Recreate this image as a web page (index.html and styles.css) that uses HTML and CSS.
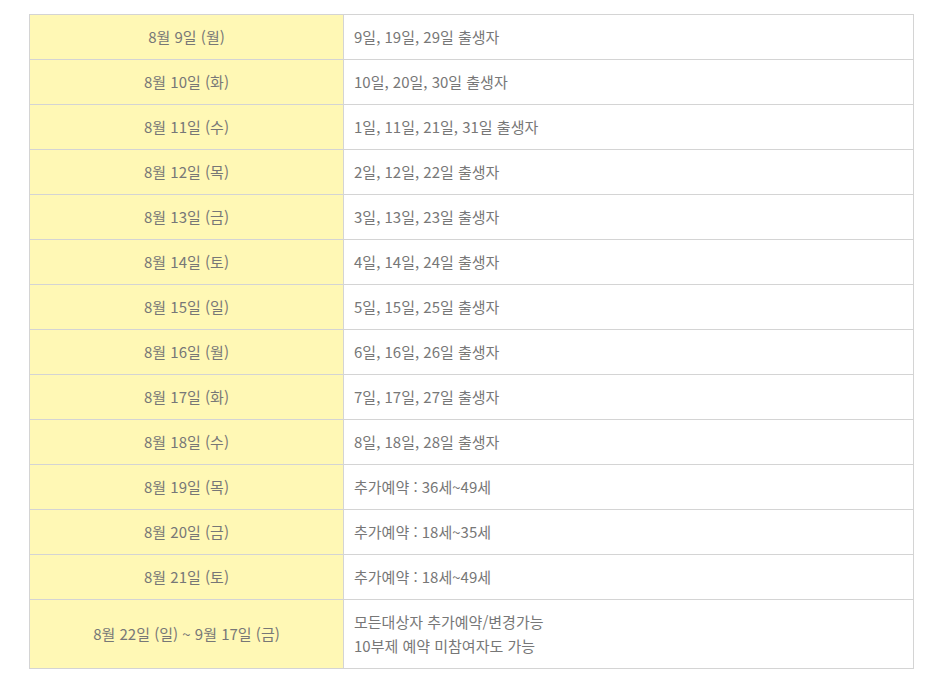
FILE: index.html
```html
<!DOCTYPE html>
<html lang="ko">
<head>
    <meta charset="UTF-8">
    <meta name="viewport" content="width=device-width, initial-scale=1.0">
    <title>예약 일정</title>
    <link rel="stylesheet" href="styles.css">
</head>
<body>
    <div class="wrap">
        <table class="schedule">
            <tr><th>8월 9일 (월)</th><td>9일, 19일, 29일 출생자</td></tr>
            <tr><th>8월 10일 (화)</th><td>10일, 20일, 30일 출생자</td></tr>
            <tr><th>8월 11일 (수)</th><td>1일, 11일, 21일, 31일 출생자</td></tr>
            <tr><th>8월 12일 (목)</th><td>2일, 12일, 22일 출생자</td></tr>
            <tr><th>8월 13일 (금)</th><td>3일, 13일, 23일 출생자</td></tr>
            <tr><th>8월 14일 (토)</th><td>4일, 14일, 24일 출생자</td></tr>
            <tr><th>8월 15일 (일)</th><td>5일, 15일, 25일 출생자</td></tr>
            <tr><th>8월 16일 (월)</th><td>6일, 16일, 26일 출생자</td></tr>
            <tr><th>8월 17일 (화)</th><td>7일, 17일, 27일 출생자</td></tr>
            <tr><th>8월 18일 (수)</th><td>8일, 18일, 28일 출생자</td></tr>
            <tr><th>8월 19일 (목)</th><td>추가예약 : 36세~49세</td></tr>
            <tr><th>8월 20일 (금)</th><td>추가예약 : 18세~35세</td></tr>
            <tr><th>8월 21일 (토)</th><td>추가예약 : 18세~49세</td></tr>
            <tr class="multi"><th>8월 22일 (일) ~ 9월 17일 (금)</th><td>모든대상자 추가예약/변경가능<br>10부제 예약 미참여자도 가능</td></tr>
        </table>
    </div>
</body>
</html>
```

FILE: styles.css
```css
body {
    margin: 0;
    background: #fff;
    font-family: "Noto Sans CJK KR", "Noto Sans", sans-serif;
    font-size: 15px;
    color: #777;
}
.wrap {
    padding: 14px 20px 0 29px;
}
.schedule {
    width: 885px;
    border-collapse: collapse;
    table-layout: fixed;
}
.schedule th,
.schedule td {
    height: 44px;
    padding: 0 11px;
    border: 1px solid #d4d4d4;
    font-weight: normal;
    line-height: 24px;
}
.schedule th {
    width: 291px;
    background: #fff8b5;
    text-align: center;
}
.schedule td {
    text-align: left;
    padding-left: 10px;
}
.schedule .multi th,
.schedule .multi td {
    height: 68px;
}
```
